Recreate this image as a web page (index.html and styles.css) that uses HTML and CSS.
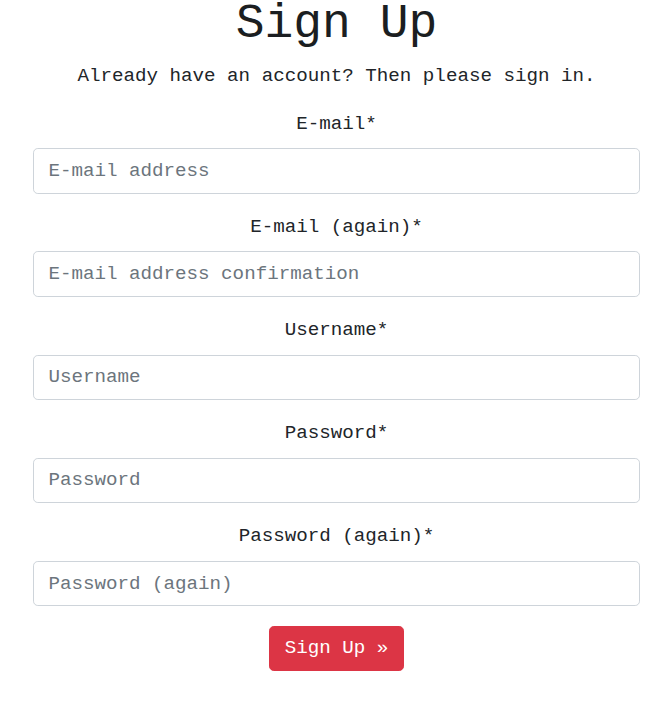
FILE: index.html
```html
<!DOCTYPE html>
<html lang="en">
<head>
<meta charset="utf-8">
<title>Sign Up</title>
<link rel="stylesheet" href="styles.css">
</head>
<body>
<main class="page">
  <h1 class="title">Sign Up</h1>
  <p class="lead">Already have an account? Then please sign in.</p>
  <form class="signup">
    <div class="group">
      <label class="label" for="email">E-mail*</label>
      <input class="field" id="email" type="email" placeholder="E-mail address">
    </div>
    <div class="group">
      <label class="label" for="email2">E-mail (again)*</label>
      <input class="field" id="email2" type="email" placeholder="E-mail address confirmation">
    </div>
    <div class="group">
      <label class="label" for="username">Username*</label>
      <input class="field" id="username" type="text" placeholder="Username">
    </div>
    <div class="group">
      <label class="label" for="password1">Password*</label>
      <input class="field" id="password1" type="password" placeholder="Password">
    </div>
    <div class="group">
      <label class="label" for="password2">Password (again)*</label>
      <input class="field" id="password2" type="password" placeholder="Password (again)">
    </div>
    <div class="actions">
      <button class="btn" type="submit">Sign Up &raquo;</button>
    </div>
  </form>
</main>
</body>
</html>
```
FILE: styles.css
```css
* { box-sizing: border-box; }
html, body { margin: 0; padding: 0; background: #fff; }
body {
  font-family: "Liberation Mono", "Courier New", monospace;
  font-size: 19.2px;
  line-height: 1.5;
  color: #212529;
}
.page {
  padding: 0 27px 0 33px;
  text-align: center;
}
.title {
  margin: 0 0 13.8px;
  font-size: 48px;
  font-weight: 400;
  line-height: 48px;
  color: #1b1e21;
}
.lead {
  margin: 0 0 19.2px;
  font-size: 19.2px;
}
.signup { margin: 0; }
.group { margin-bottom: 19.4px; }
.label {
  display: block;
  margin-bottom: 9.6px;
}
.field {
  display: block;
  width: 100%;
  height: 45.4px;
  padding: 7.2px 14.4px;
  font: inherit;
  color: #495057;
  background: #fff;
  border: 1px solid #ced4da;
  border-radius: 4.8px;
}
.field::placeholder { color: #6c757d; opacity: 1; }
.actions {
  display: flex;
  justify-content: center;
  padding-top: 0.4px;
}
.btn {
  font: inherit;
  color: #fff;
  background: #dc3545;
  border: 1px solid #dc3545;
  border-radius: 4.8px;
  padding: 7.2px 14.4px;
  line-height: 1.5;
  cursor: pointer;
}
```
